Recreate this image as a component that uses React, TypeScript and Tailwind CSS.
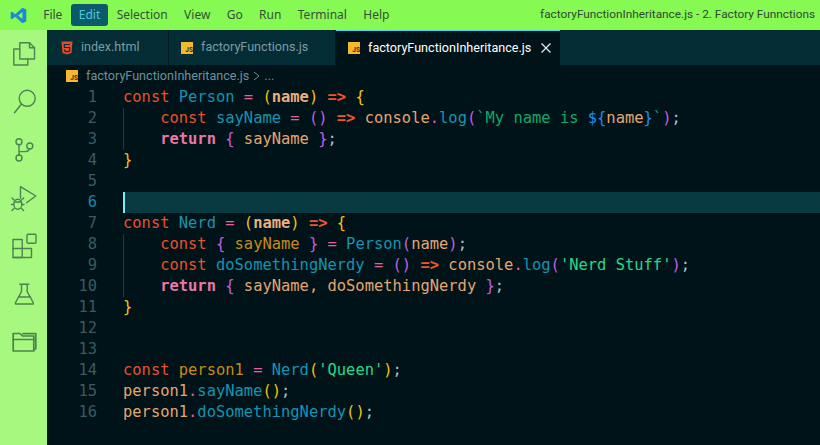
const MENU = ["File", "Edit", "Selection", "View", "Go", "Run", "Terminal", "Help"];

// token colours
const kw = "text-[#e8512c]";
const fn = "text-[#1593b2]";
const op = "text-[#e4619b]";
const yel = "text-[#f4c20d]";
const pur = "text-[#c05fe0]";
const arg = "text-[#e8b07e] font-bold";
const vr = "text-[#e3a672]";
const arrow = "text-[#f0542c] font-bold";
const ret = "text-[#e678a8] font-bold";
const str = "text-[#27d98c]";
const tpl = "text-[#10a86c]";
const blue = "text-[#1e8cf0]";
const semi = "text-[#a9c4cc]";
const prs = "text-[#c98a16]";

type Tok = [string, string];
type Line = { toks: Tok[]; guide?: boolean };

const LINES: Line[] = [
  { toks: [["const ", kw], ["Person ", fn], ["= ", op], ["(", yel], ["name", arg], [") ", yel], ["=> ", arrow], ["{", yel]] },
  {
    guide: true,
    toks: [
      ["    const ", kw], ["sayName ", fn], ["= ", op], ["(", pur], [") ", pur], ["=> ", arrow], ["console", vr], [".", op], ["log", fn],
      ["(", pur], ["`My name is ", tpl], ["${", blue], ["name", vr], ["}", blue], ["`", tpl], [")", pur], [";", semi],
    ],
  },
  { guide: true, toks: [["    return ", ret], ["{ ", pur], ["sayName ", vr], ["}", pur], [";", semi]] },
  { toks: [["}", yel]] },
  { toks: [] },
  { toks: [] },
  { toks: [["const ", kw], ["Nerd ", fn], ["= ", op], ["(", yel], ["name", arg], [") ", yel], ["=> ", arrow], ["{", yel]] },
  { guide: true, toks: [["    const ", kw], ["{ ", pur], ["sayName ", prs], ["} ", pur], ["= ", op], ["Person", fn], ["(", pur], ["name", vr], [")", pur], [";", semi]] },
  {
    guide: true,
    toks: [
      ["    const ", kw], ["doSomethingNerdy ", fn], ["= ", op], ["(", pur], [") ", pur], ["=> ", arrow], ["console", vr], [".", op], ["log", fn],
      ["(", pur], ["'Nerd Stuff'", str], [")", pur], [";", semi],
    ],
  },
  { guide: true, toks: [["    return ", ret], ["{ ", pur], ["sayName, doSomethingNerdy ", vr], ["}", pur], [";", semi]] },
  { toks: [["}", yel]] },
  { toks: [] },
  { toks: [] },
  { toks: [["const ", kw], ["person1 ", prs], ["= ", op], ["Nerd", fn], ["(", yel], ["'Queen'", str], [")", yel], [";", semi]] },
  { toks: [["person1", vr], [".", op], ["sayName", fn], ["(", yel], [")", yel], [";", semi]] },
  { toks: [["person1", vr], [".", op], ["doSomethingNerdy", fn], ["(", yel], [")", yel], [";", semi]] },
];

const VsLogo = () => (
  <svg width="17" height="17" viewBox="0 0 24 24">
    <path d="M17.5 1 L23 3.6 V20.4 L17.5 23 L7.5 13.8 L3 17.3 L1 16.2 V7.8 L3 6.7 L7.5 10.2 Z M17.5 7 L11.5 12 L17.5 17 Z" fill="#1f8ad2" fillRule="evenodd" />
  </svg>
);

const JsIcon = () => (
  <span className="relative block h-3 w-3 shrink-0 bg-[#f5b82e]">
    <span className="absolute right-0 bottom-0 text-[6.5px] leading-[7px] font-bold text-[#3a2c05]">JS</span>
  </span>
);

const HtmlIcon = () => (
  <svg width="12" height="14" viewBox="0 0 24 28">
    <path d="M1 1 H23 L21 24 L12 27 L3 24 Z" fill="#e44d26" />
    <path d="M18 7 H6.5 L7 13 H17.5 L17 20 L12 21.5 L7.5 20 L7.2 17" fill="none" stroke="#06303a" strokeWidth="2.4" />
  </svg>
);

const ActivityIcon = ({ children }: { children: React.ReactNode }) => (
  <svg width="30" height="30" viewBox="0 0 30 30" fill="none" stroke="#4f8253" strokeWidth="1.4" strokeLinejoin="round" strokeLinecap="round">
    {children}
  </svg>
);

function ActivityBar() {
  return (
    <div className="flex w-[47px] shrink-0 flex-col items-center gap-[18px] bg-[#a6f97e] pt-[9px]">
      <ActivityIcon>
        <path d="M10.8 3.7 H20.5 L25.5 8.7 V20 H10.8 Z" />
        <path d="M20.5 3.7 V8.7 H25.5" />
        <path d="M10.8 10 H4.8 V26 H18.8 V20" />
      </ActivityIcon>
      <ActivityIcon>
        <circle cx="18.2" cy="11.3" r="8" />
        <path d="M12.5 17 L5.5 25.7" />
      </ActivityIcon>
      <ActivityIcon>
        <circle cx="10" cy="6.7" r="3" />
        <circle cx="10" cy="23" r="3" />
        <circle cx="20.8" cy="11" r="3" />
        <path d="M10 9.7 V20 M10 16.6 H16 C18 16.6 20 15.5 20.5 14" />
      </ActivityIcon>
      <ActivityIcon>
        <path d="M11.5 15.3 V3.7 L26.8 13 L17.5 19.7" />
        <ellipse cx="8.8" cy="21.3" rx="4" ry="5" />
        <path d="M5 17 L3 15 M12.6 17 L14.6 15 M4.5 21.5 H2.5 M13 21.5 H15 M5 25.5 L3 27.5 M12.6 25.5 L14.6 27.5 M5.5 19 H12" />
      </ActivityIcon>
      <ActivityIcon>
        <path d="M4 8.5 H13.2 V26.5 H4 Z" />
        <path d="M4 17.5 H22.5 V26.5 H4" />
        <rect x="18" y="3.3" width="9" height="9" rx="1" />
      </ActivityIcon>
      <ActivityIcon>
        <path d="M10.8 5.3 H19.8 M12.5 5.3 V12.7 L6.5 23.5 V25 H24.2 V23.5 L18.2 12.7 V5.3" />
        <path d="M9.5 18 H21.5" />
      </ActivityIcon>
      <ActivityIcon>
        <path d="M4.2 12.5 H24.8 V24 H4.2 Z" strokeWidth="1.7" />
        <path d="M4.2 12.5 V6.5 H11 L13.5 9 H24.8 V12.5" strokeWidth="1.7" />
        <path d="M14 6.7 H26.8 V21.5 L24.8 23" strokeWidth="1.7" />
      </ActivityIcon>
    </div>
  );
}

function Tab({ name, width, active, html }: { name: string; width: string; active?: boolean; html?: boolean }) {
  return (
    <div
      className={`flex h-full shrink-0 items-center ${html ? "pl-[14px]" : "pl-[12px]"} ${width} ${
        active ? "border-t border-[#4fd6ee] bg-[#001318] text-white" : "border-r border-[#01191f] bg-[#042c35] text-[#7b9ca3]"
      }`}
    >
      {html ? <HtmlIcon /> : <JsIcon />}
      <span className="ml-[8px]">{name}</span>
      {active && (
        <svg className="ml-[10px]" width="10" height="10" viewBox="0 0 10 10" stroke="#e4eef0" strokeWidth="1.2">
          <path d="M0.5 0.5 L9.5 9.5 M9.5 0.5 L0.5 9.5" />
        </svg>
      )}
    </div>
  );
}

export default function App() {
  return (
    <div className="flex h-[445px] w-[820px] flex-col overflow-hidden bg-[#001318] font-['Noto_Sans',sans-serif]">
      {/* title bar */}
      <div className="flex h-[30px] shrink-0 items-center bg-[#86f952] text-[12px] text-[#33513a]">
        <div className="flex w-[35px] justify-center pl-[1px]">
          <VsLogo />
        </div>
        <div className="flex h-full items-center">
          {MENU.map((m) => (
            <span
              key={m}
              className={`flex h-[22px] items-center rounded-[3px] px-[8.2px] ${m === "Edit" ? "bg-[#0a5a6b] text-[#4ec6dc]" : ""}`}
            >
              {m}
            </span>
          ))}
        </div>
        <span className="ml-auto pr-[5px] font-['Roboto',sans-serif] text-[11.8px] whitespace-nowrap text-[#2e4a34]">
          factoryFunctionInheritance.js - 2. Factory Funnctions
        </span>
      </div>

      <div className="flex min-h-0 flex-1">
        <ActivityBar />
        <div className="flex min-w-0 flex-1 flex-col">
          {/* tabs */}
          <div className="flex h-[35px] shrink-0 bg-[#042c35] font-['Roboto',sans-serif] text-[12.6px]">
            <Tab name="index.html" width="w-[122px]" html />
            <Tab name="factoryFunctions.js" width="w-[167px]" />
            <Tab name="factoryFunctionInheritance.js" width="w-[224px]" active />
          </div>

          {/* breadcrumb */}
          <div className="flex h-[22px] shrink-0 items-center pl-[19px] font-['Roboto',sans-serif] text-[12.6px] text-[#6f9098]">
            <JsIcon />
            <span className="ml-[8px]">factoryFunctionInheritance.js</span>
            <svg className="mx-[4px]" width="7" height="10" viewBox="0 0 7 10" fill="none" stroke="#6f9098">
              <path d="M1 1 L6 5 L1 9" />
            </svg>
            <span>...</span>
          </div>

          {/* editor */}
          <div className="font-['DejaVu_Sans_Mono'] text-[15.45px] leading-[21px]">
            {LINES.map((line, i) => {
              const current = i === 5;
              return (
                <div key={i} className="flex h-[21px]">
                  <span className={`w-[50px] shrink-0 text-right ${current ? "text-[#1a86a6]" : "text-[#3c5a62]"}`}>{i + 1}</span>
                  <div
                    className={`ml-[26px] flex-1 whitespace-pre ${
                      current
                        ? "bg-[#083a42] shadow-[inset_2px_0_0_#7fe9f7]"
                        : line.guide
                          ? "shadow-[inset_1px_0_0_#1f3a40]"
                          : ""
                    }`}
                  >
                    {line.toks.map(([t, c], j) => (
                      <span key={j} className={c}>
                        {t}
                      </span>
                    ))}
                  </div>
                </div>
              );
            })}
          </div>
        </div>
      </div>
    </div>
  );
}
